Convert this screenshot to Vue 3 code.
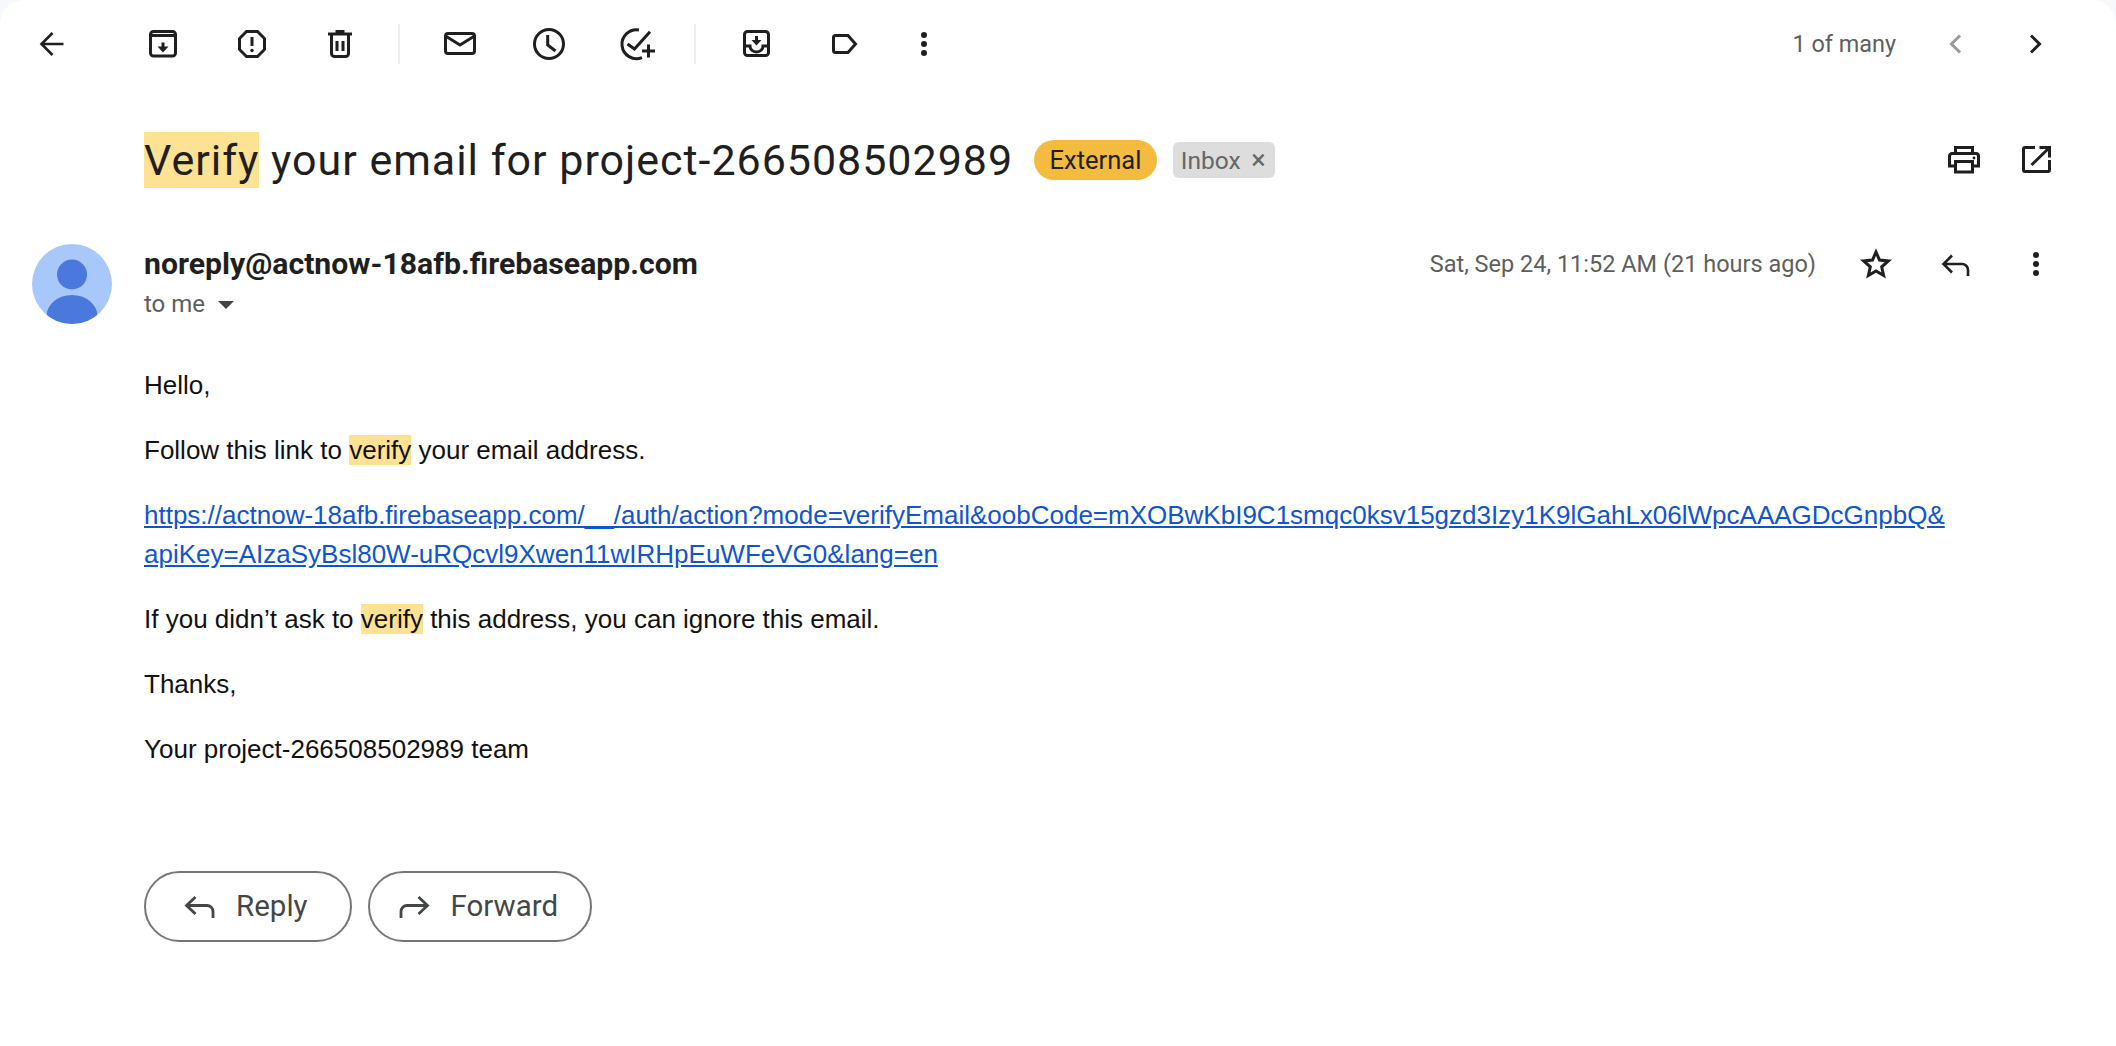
<script setup>
const paragraphsEnd = 'Thanks,'
</script>

<template>
  <div class="panel">
    <header class="toolbar">
      <button class="ico thin" aria-label="Back">
        <svg viewBox="0 0 40 40"><path d="M31.5 20H10M20.5 9L9.5 20L20.5 31" /></svg>
      </button>
      <div class="group first">
        <button class="ico" aria-label="Archive">
          <svg viewBox="0 0 40 40"><rect x="7.5" y="7.5" width="25" height="24.5" rx="3" /><path d="M7.5 11.5H32.5M20 18.5v5" /><polygon class="solid" points="14.5,22.5 25.5,22.5 20,28.5" /></svg>
        </button>
        <button class="ico" aria-label="Report spam">
          <svg viewBox="0 0 40 40"><polygon points="14.5,7.5 25.5,7.5 32.5,14.5 32.5,25.5 25.5,32.5 14.5,32.5 7.5,25.5 7.5,14.5" /><path d="M20 13v9" /><circle class="solid" cx="20" cy="26.5" r="1.7" /></svg>
        </button>
        <button class="ico" aria-label="Delete">
          <svg viewBox="0 0 40 40"><path d="M8 10H32M15.5 7.5H24.5M11.5 10V29.5a3 3 0 0 0 3 3h11a3 3 0 0 0 3-3V10M17 17v10M23 17v10" /></svg>
        </button>
      </div>
      <span class="divider"></span>
      <div class="group">
        <button class="ico" aria-label="Mark as unread">
          <svg viewBox="0 0 40 40"><rect x="5.5" y="9.5" width="29" height="20" rx="2.5" /><path d="M5.5 12L20 21L34.5 12" /></svg>
        </button>
        <button class="ico" aria-label="Snooze">
          <svg viewBox="0 0 40 40"><circle cx="20" cy="20" r="14.5" /><path d="M18.7 11V21L26.5 27" /></svg>
        </button>
        <button class="ico" aria-label="Add to tasks">
          <svg viewBox="0 0 40 40"><path d="M22 5.9A14.5 14.5 0 1 0 25 33.6M10.5 20L17.5 25L33 7.7M31.5 20.5v13M25 27h13" /></svg>
        </button>
      </div>
      <span class="divider second"></span>
      <div class="group tight">
        <button class="ico" aria-label="Move to">
          <svg viewBox="0 0 40 40"><rect x="7.5" y="7.5" width="24" height="24" rx="3" /><path d="M7.5 22H13a6.5 6 0 0 0 13 0H31.5M19.5 12v5" /><polygon class="solid" points="14.5,16 24.5,16 19.5,21.5" /></svg>
        </button>
        <button class="ico" aria-label="Labels">
          <svg viewBox="0 0 40 40"><path d="M10.5 11.5H23L30.5 20L23 28.5H10.5a2 2 0 0 1-2-2V13.5a2 2 0 0 1 2-2z" /></svg>
        </button>
        <button class="ico" aria-label="More">
          <svg viewBox="0 0 40 40"><circle class="solid" cx="20" cy="11" r="3" /><circle class="solid" cx="20" cy="20" r="3" /><circle class="solid" cx="20" cy="29" r="3" /></svg>
        </button>
      </div>
      <div class="pager">
        <span class="count">1 of many</span>
        <button class="ico prev" aria-label="Newer">
          <svg viewBox="0 0 40 40"><path d="M25 11.5L16.5 20L25 28.5" /></svg>
        </button>
        <button class="ico" aria-label="Older">
          <svg viewBox="0 0 40 40"><path d="M16 11.5L24.5 20L16 28.5" /></svg>
        </button>
      </div>
    </header>

    <section class="subject-row">
      <h1 class="subject"><mark class="hl-big">Verify</mark> your email for project-266508502989</h1>
      <span class="badge-ext">External</span>
      <span class="badge-inbox">Inbox <span class="x">×</span></span>
      <div class="subject-actions">
        <button class="ico" aria-label="Print all">
          <svg viewBox="0 0 40 40"><path d="M11.5 13.5V7.5H28.5V13.5M11.5 26H5.5V16a2.5 2.5 0 0 1 2.5-2.5H32a2.5 2.5 0 0 1 2.5 2.5V26H28.5" /><rect x="11.5" y="21.5" width="17" height="10.5" /><circle class="solid" cx="30" cy="18" r="1.4" /></svg>
        </button>
        <button class="ico" aria-label="In new window">
          <svg viewBox="0 0 40 40"><path d="M19 7.5H9a1.5 1.5 0 0 0-1.5 1.5V30a1.5 1.5 0 0 0 1.5 1.5H32a1.5 1.5 0 0 0 1.5-1.5V20M15.5 25L33 8M23.5 7.5H33.5V17.5" /></svg>
        </button>
      </div>
    </section>

    <section class="message-head">
      <svg class="avatar" viewBox="0 0 80 80">
        <defs><clipPath id="av"><circle cx="40" cy="40" r="40" /></clipPath></defs>
        <circle cx="40" cy="40" r="40" fill="#a8c7fa" />
        <g clip-path="url(#av)" fill="#4b78dc">
          <ellipse cx="40" cy="30.5" rx="15" ry="15" />
          <ellipse cx="40" cy="72" rx="25.5" ry="21" />
        </g>
      </svg>
      <div class="who">
        <div class="sender">noreply@actnow-18afb.firebaseapp.com</div>
        <div class="to">to me <span class="caret"></span></div>
      </div>
      <div class="meta">
        <span class="date">Sat, Sep 24, 11:52 AM (21 hours ago)</span>
        <button class="ico" aria-label="Star">
          <svg viewBox="0 0 40 40"><polygon points="20,8 23.5,16.1 32.4,17 25.7,22.9 27.6,31.5 20,27 12.4,31.5 14.3,22.9 7.6,17 16.5,16.1" /></svg>
        </button>
        <button class="ico thin" aria-label="Reply">
          <svg viewBox="0 0 40 40"><path d="M16 11.5L7.5 20L16 28.5M7.5 20H26a6 6 0 0 1 6 6v6" /></svg>
        </button>
        <button class="ico" aria-label="More">
          <svg viewBox="0 0 40 40"><circle class="solid" cx="20" cy="11" r="3" /><circle class="solid" cx="20" cy="20" r="3" /><circle class="solid" cx="20" cy="29" r="3" /></svg>
        </button>
      </div>
    </section>

    <article class="body">
      <p>Hello,</p>
      <p>Follow this link to <mark class="hl">verify</mark> your email address.</p>
      <p><a href="#">https://actnow-18afb.firebaseapp.com/__/auth/action?mode=verifyEmail&amp;oobCode=mXOBwKbI9C1smqc0ksv15gzd3Izy1K9lGahLx06lWpcAAAGDcGnpbQ&amp;<br />apiKey=AIzaSyBsl80W-uRQcvl9Xwen11wIRHpEuWFeVG0&amp;lang=en</a></p>
      <p>If you didn’t ask to <mark class="hl">verify</mark> this address, you can ignore this email.</p>
      <p>{{ paragraphsEnd }}</p>
      <p>Your project-266508502989 team</p>
    </article>

    <footer class="actions">
      <button class="pill reply">
        <svg viewBox="0 0 40 40"><path d="M15.5 11L6.5 19.5L15.5 28M6.5 19.5H27a6 6 0 0 1 6 6v6.5" /></svg>
        <span>Reply</span>
      </button>
      <button class="pill forward">
        <svg viewBox="0 0 40 40"><path d="M24.5 11L33.5 19.5L24.5 28M33.5 19.5H13a6 6 0 0 0-6 6v6.5" /></svg>
        <span>Forward</span>
      </button>
    </footer>
  </div>
</template>

<style scoped>
.panel {
  background: #fff;
  border-radius: 24px 24px 0 0;
  height: 1046px;
  box-sizing: border-box;
  overflow: hidden;
  font-family: Roboto, "Liberation Sans", sans-serif;
  color: #1f1f1f;
}
button { background: none; border: 0; padding: 0; font: inherit; color: inherit; }
.ico { width: 40px; height: 40px; flex: none; display: block; }
.ico svg { display: block; width: 40px; height: 40px; fill: none; stroke: currentColor; stroke-width: 3; }
.ico.thin svg { stroke-width: 2.6; }
svg .solid { fill: currentColor; stroke: none; }

.toolbar { display: flex; align-items: center; height: 88px; padding: 0 61px 0 32px; }
.group { display: flex; gap: 48.5px; }
.group.first { margin-left: 71px; }
.group.tight { gap: 47.5px; }
.group.tight .ico:last-child { margin-left: -8.5px; }
.divider { width: 2px; height: 40px; background: #eeeeee; margin: 0 40px 0 38px; flex: none; }
.divider.second { margin: 0 41px 0 37px; }
.pager { margin-left: auto; display: flex; align-items: center; gap: 40px; }
.count { font-size: 23.4px; color: #5e5e5e; margin-right: -1px; }
.prev { color: #999; }

.subject-row { display: flex; align-items: center; height: 56px; margin-top: 44px; padding: 0 60px 0 144px; }
.subject { margin: 0; font-size: 43px; letter-spacing: 0.97px; font-weight: 400; line-height: 56px; white-space: nowrap; color: #1f1f1f; }
.hl-big { background: #fde293; color: inherit; display: inline-block; height: 56px; }
.badge-ext {
  margin-left: 21px; height: 40px; padding: 0 15.5px; border-radius: 20px; background: #f4bb41;
  font-size: 25.5px; line-height: 40px; color: #202124;
}
.badge-inbox {
  margin-left: 16px; height: 36px; padding: 0 9px 0 8px; border-radius: 6px; background: #dddddd;
  font-size: 24.5px; line-height: 36px; color: #666;
}
.x { font-size: 27px; margin-left: 4.5px; }
.subject-actions { margin-left: auto; display: flex; gap: 32px; }

.message-head { display: flex; align-items: flex-start; margin-top: 56px; padding: 0 60px 0 32px; }
.avatar { width: 80px; height: 80px; flex: none; }
.who { margin-left: 32px; }
.sender { font-size: 30.2px; font-weight: 700; line-height: 32px; margin-top: 4px; color: #1f1f1f; }
.to { font-size: 24px; line-height: 32px; margin-top: 8px; color: #5e5e5e; display: flex; align-items: center; gap: 13px; }
.caret { width: 0; height: 0; border-left: 8px solid transparent; border-right: 8px solid transparent; border-top: 8px solid #444; margin-top: 2px; }
.meta { margin-left: auto; display: flex; align-items: center; gap: 40px; height: 40px; margin-top: 0; }
.date { font-size: 23.5px; color: #5e5e5e; }

.body { margin: 42px 0 0 144px; font-family: "Liberation Sans", Arial, sans-serif; font-size: 26px; line-height: 38.5px; color: #111; }
.body p { margin: 0 0 26.5px; white-space: nowrap; }
.body a { color: #1155cc; }
.hl { background: #fde293; color: inherit; }

.actions { display: flex; gap: 16px; margin: 102.5px 0 0 144px; }
.pill {
  display: flex; align-items: center; gap: 16.5px; height: 71px; box-sizing: border-box;
  border: 2px solid #747775; border-radius: 36px; color: #444746; font-size: 29.5px;
  font-family: Roboto, sans-serif;
}
.pill svg { width: 40px; height: 40px; fill: none; stroke: currentColor; stroke-width: 2.8; flex: none; }
.reply { padding: 0 42px 0 33.5px; }
.forward { padding: 0 32px 0 24.5px; }
</style>

<style>
html, body { background: #f6f8fc; }
</style>
